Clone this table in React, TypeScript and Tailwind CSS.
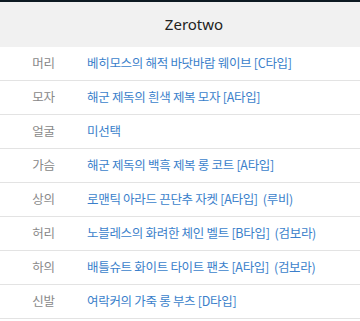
import React from "react";

const rows: { part: string; item: string }[] = [
  { part: "머리", item: "베히모스의 해적 바닷바람 웨이브 [C타입]" },
  { part: "모자", item: "해군 제독의 흰색 제복 모자 [A타입]" },
  { part: "얼굴", item: "미선택" },
  { part: "가슴", item: "해군 제독의 백흑 제복 롱 코트 [A타입]" },
  { part: "상의", item: "로맨틱 아라드 끈단추 자켓 [A타입]  (루비)" },
  { part: "허리", item: "노블레스의 화려한 체인 벨트 [B타입]  (검보라)" },
  { part: "하의", item: "배틀슈트 화이트 타이트 팬츠 [A타입]  (검보라)" },
  { part: "신발", item: "여락커의 가죽 롱 부츠 [D타입]" },
];

const App = () => {
  return (
    <div
      className="w-[360px] h-[321px] bg-white overflow-hidden"
      style={{ fontFamily: '"Noto Sans CJK KR", "Noto Sans", sans-serif' }}
    >
      <div className="h-[2px] bg-[#0d1a22]" />
      <div className="h-[45px] bg-[#f1f1f1] flex items-center justify-center pl-[28px]">
        <span className="text-[15px] text-[#222]" style={{ fontFamily: '"Noto Sans", "Noto Sans CJK KR", sans-serif' }}>
          Zerotwo
        </span>
      </div>
      {rows.map((r) => (
        <div key={r.part} className="h-[34px] flex items-center border-b border-[#e3e3e3] text-[12.5px] tracking-[-0.3px]">
          <div className="w-[87px] text-center text-[#888]">{r.part}</div>
          <div className="text-[#3b7fcb] whitespace-pre">{r.item}</div>
        </div>
      ))}
    </div>
  );
};

export default App;
